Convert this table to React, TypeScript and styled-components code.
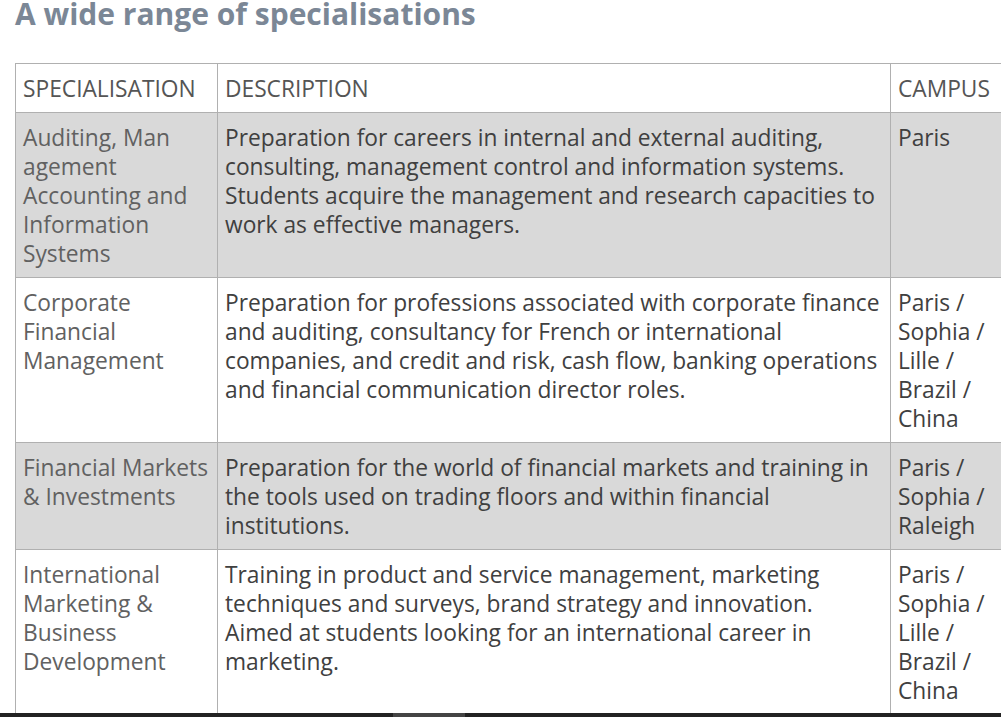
import styled, { createGlobalStyle } from 'styled-components';

const GlobalStyle = createGlobalStyle`
	html, body {
		margin: 0;
		padding: 0;
		background: #ffffff;
		overflow: hidden;
	}
`;

const Page = styled.div`
	display: flex;
	flex-direction: column;
	width: 1001px;
	height: 717px;
	font-family: 'Open Sans', 'DejaVu Sans', sans-serif;
`;

const Content = styled.div`
	flex: 1;
	overflow: hidden;
	padding: 0 0 0 15px;
`;

const Title = styled.h2`
	margin: -7px 0 29px 0;
	font-size: 30px;
	line-height: 41px;
	font-weight: 700;
	color: #7b8796;
`;

const Table = styled.table`
	border-collapse: collapse;
	table-layout: fixed;
	width: 1000px;
	font-size: 22.75px;
	line-height: 29px;
`;

const HeadCell = styled.th<{ $w: number }>`
	box-sizing: border-box;
	width: ${(p) => p.$w}px;
	text-align: left;
	font-weight: 400;
	text-transform: uppercase;
	color: #555555;
	border: 1px solid #b0b0b0;
	padding: 10px 7px 9px;
	vertical-align: top;
`;

const Row = styled.tr<{ $shaded?: boolean }>`
	background: ${(p) => (p.$shaded ? '#d9d9d9' : '#ffffff')};
`;

const NameCell = styled.td`
	color: #616161;
	border: 1px solid #b0b0b0;
	padding: 10px 6px 9px 7px;
	vertical-align: top;
`;

const Cell = styled.td`
	color: #404040;
	border: 1px solid #b0b0b0;
	padding: 10px 7px 9px;
	vertical-align: top;
`;

const ScrollBar = styled.div`
	height: 4px;
	background: #222222;
	display: flex;
`;

const Thumb = styled.div`
	margin-left: 393px;
	width: 72px;
	background: #444444;
`;

const rows = [
	{
		name: (
			<>
				Auditing, Man
				<br />
				agement Accounting and Information Systems
			</>
		),
		desc: 'Preparation for careers in internal and external auditing, consulting, management control and information systems. Students acquire the management and research capacities to work as effective managers.',
		campus: 'Paris',
		shaded: true,
	},
	{
		name: 'Corporate Financial Management',
		desc: 'Preparation for professions associated with corporate finance and auditing, consultancy for French or international companies, and credit and risk, cash flow, banking operations and financial communication director roles.',
		campus: 'Paris / Sophia / Lille / Brazil / China',
	},
	{
		name: 'Financial Markets & Investments',
		desc: 'Preparation for the world of financial markets and training in the tools used on trading floors and within financial institutions.',
		campus: 'Paris / Sophia / Raleigh',
		shaded: true,
	},
	{
		name: 'International Marketing & Business Development',
		desc: 'Training in product and service management, marketing techniques and surveys, brand strategy and innovation. Aimed at students looking for an international career in marketing.',
		campus: 'Paris / Sophia / Lille / Brazil / China',
	},
];

const App = () => {
	return (
		<Page>
			<GlobalStyle />
			<Content>
				<Title>A wide range of specialisations</Title>
				<Table>
					<thead>
						<tr>
							<HeadCell $w={202}>Specialisation</HeadCell>
							<HeadCell $w={673}>Description</HeadCell>
							<HeadCell $w={125}>Campus</HeadCell>
						</tr>
					</thead>
					<tbody>
						{rows.map((r, i) => (
							<Row key={i} $shaded={r.shaded}>
								<NameCell>{r.name}</NameCell>
								<Cell>{r.desc}</Cell>
								<Cell>{r.campus}</Cell>
							</Row>
						))}
					</tbody>
				</Table>
			</Content>
			<ScrollBar>
				<Thumb />
			</ScrollBar>
		</Page>
	);
};

export default App;
